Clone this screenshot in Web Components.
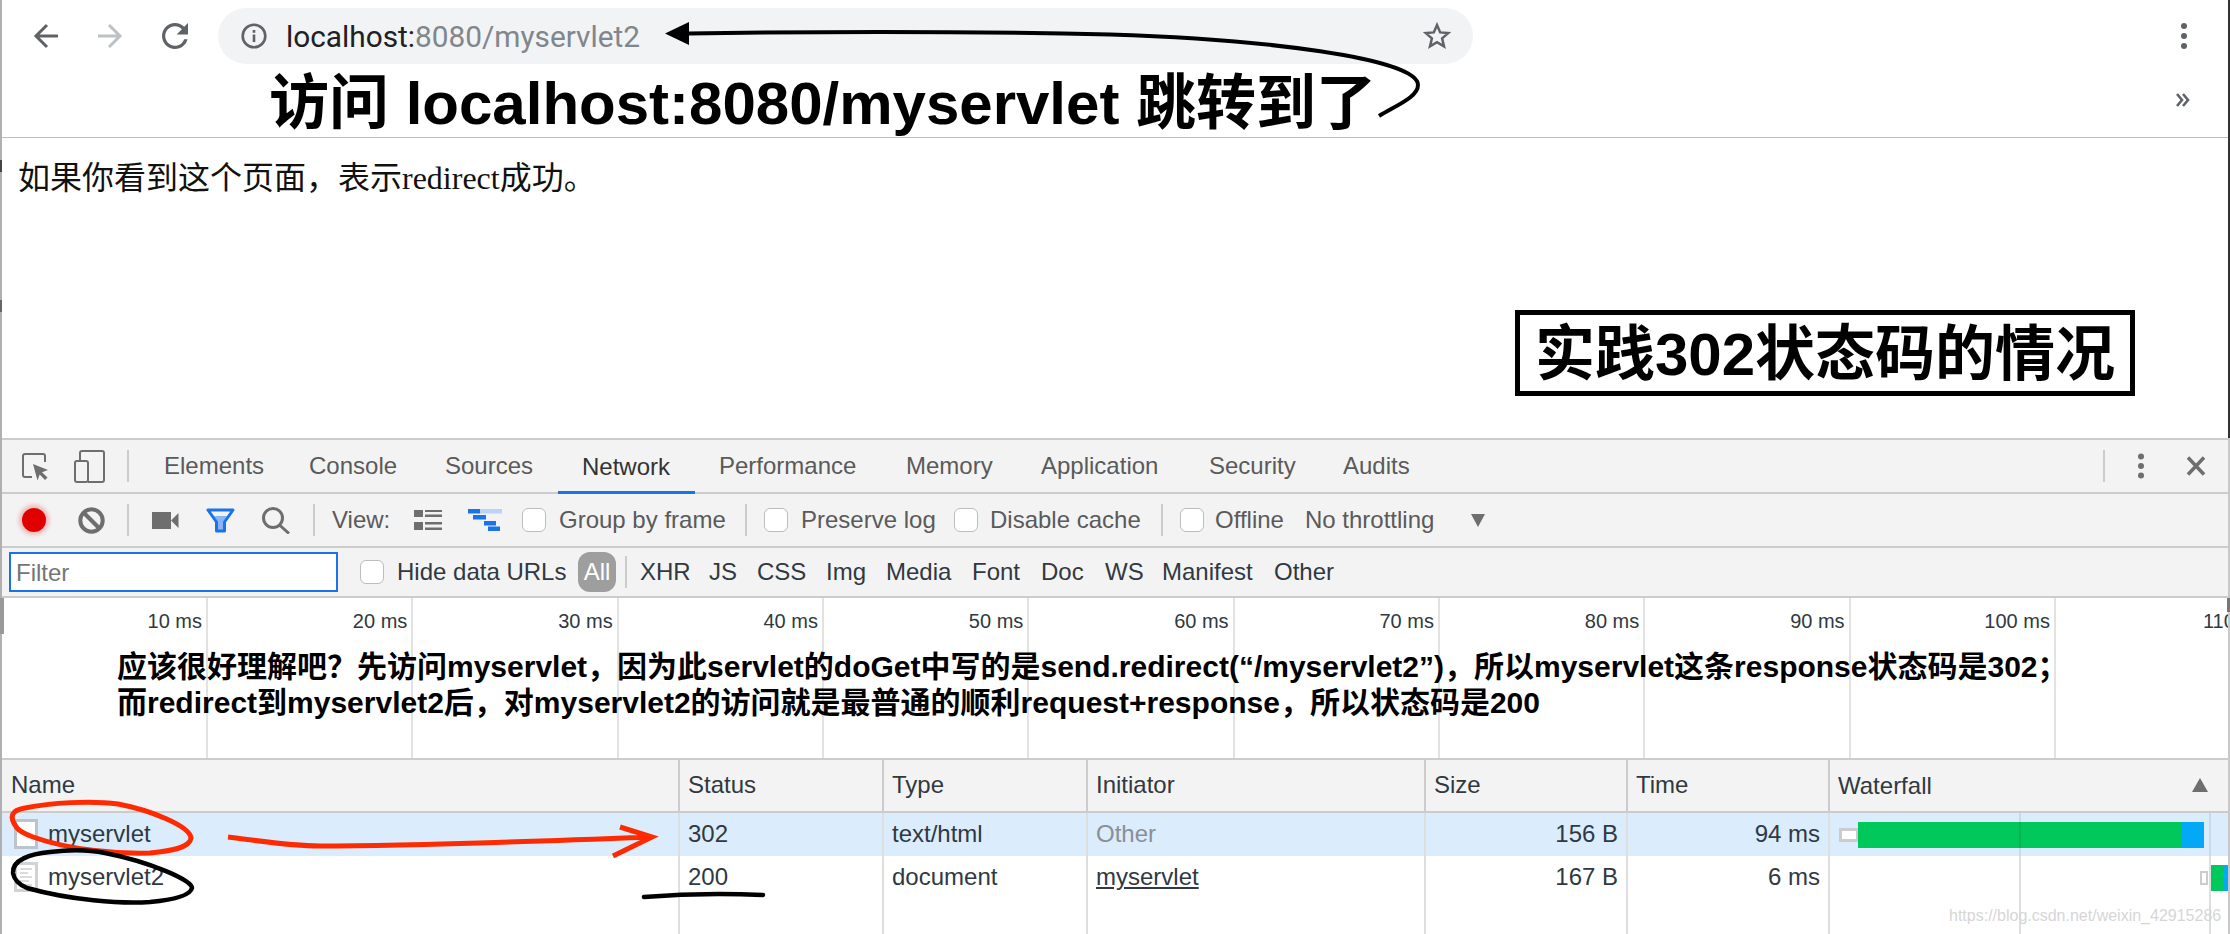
<!DOCTYPE html>
<html lang="zh">
<head>
<meta charset="utf-8">
<title>myservlet2</title>
<style>
html,body{margin:0;padding:0;background:#fff}
body{width:2230px;height:934px;overflow:hidden;position:relative;font-family:"Liberation Sans","Noto Sans CJK SC",sans-serif}
</style>
</head>
<body>
<browser-bar></browser-bar>
<page-view>
  如果你看到这个页面，表示redirect成功。
  <boxed-note slot="note">实践302状态码的情况</boxed-note>
</page-view>
<dev-tools>
  <dt-tabs></dt-tabs>
  <net-toolbar></net-toolbar>
  <filter-bar></filter-bar>
  <time-line></time-line>
  <net-table></net-table>
</dev-tools>
<annot-layer></annot-layer>
<script>
const SANS='"Liberation Sans","Noto Sans CJK SC",sans-serif';
function cols(pos,end){const a=[];for(let i=0;i<pos.length;i++){a.push(((i+1<pos.length?pos[i+1]:end)-pos[i])+'px');}return a.join(' ');}
function def(name,css,html){
  customElements.define(name,class extends HTMLElement{
    constructor(){super();const r=this.attachShadow({mode:'open'});r.innerHTML='<style>'+css+'</style>'+html;}
  });
}
const ICON={
 back:'<svg width="26" height="26" viewBox="0 0 26 26" fill="none" stroke="currentColor" stroke-width="3"><path d="M25 13H3M14 2L3 13l11 11"/></svg>',
 fwd:'<svg width="26" height="26" viewBox="0 0 26 26" fill="none" stroke="currentColor" stroke-width="3"><path d="M1 13h22M12 2l11 11-11 11"/></svg>',
 reload:'<svg width="26" height="26" viewBox="4 4 16 16" fill="#5f6368"><path d="M17.65 6.35C16.2 4.9 14.21 4 12 4c-4.42 0-7.99 3.58-7.99 8s3.57 8 7.99 8c3.73 0 6.84-2.55 7.73-6h-2.08c-.82 2.33-3.04 4-5.65 4-3.31 0-6-2.69-6-6s2.69-6 6-6c1.66 0 3.14.69 4.22 1.78L13 11h7V4l-2.35 2.35z"/></svg>',
 info:'<svg width="26" height="26" viewBox="0 0 26 26"><circle cx="13" cy="13" r="11.3" fill="none" stroke="#5f6368" stroke-width="2.6"/><rect x="11.7" y="11.5" width="2.6" height="7.5" fill="#5f6368"/><rect x="11.7" y="7" width="2.6" height="2.8" fill="#5f6368"/></svg>',
 star:'<svg width="28" height="28" viewBox="0 0 28 28" fill="none" stroke="#5f6368" stroke-width="2.5" stroke-linejoin="miter"><path d="M14 3l3.2 7.4 8 .7-6.1 5.3 1.9 7.9L14 20.1 7 24.3l1.9-7.9L2.8 11.100l8-.7z"/></svg>',
 kebab:'<svg width="8" height="28" viewBox="0 0 8 28" fill="#5f6368"><circle cx="4" cy="4" r="3"/><circle cx="4" cy="14" r="3"/><circle cx="4" cy="24" r="3"/></svg>',
 more:'<svg width="14" height="14" viewBox="0 0 14 14" fill="none" stroke="#5f6368" stroke-width="2.6"><path d="M1 1l5 6-5 6M7 1l5 6-5 6"/></svg>',
 inspect:'<svg width="27" height="27" viewBox="0 0 27 27"><path d="M10 24H3a2 2 0 0 1-2-2V3a2 2 0 0 1 2-2h18a2 2 0 0 1 2 2v6" fill="none" stroke="#6e6e6e" stroke-width="2"/><path d="M11 11l15 6-6 2.300 5.500 5.200-2.500 2.500-5.300-5.500-2.200 6z" fill="#6e6e6e"/></svg>',
 device:'<svg width="31" height="33" viewBox="0 0 31 33" fill="none" stroke="#6e6e6e" stroke-width="2"><path d="M6 10V3a2 2 0 0 1 2-2h20a2 2 0 0 1 2 2v27a2 2 0 0 1-2 2H14"/><rect x="1" y="11" width="13" height="21" rx="2"/></svg>',
 clear:'<svg width="27" height="27" viewBox="0 0 27 27" fill="none" stroke="#6e6e6e" stroke-width="4"><circle cx="13.500" cy="13.500" r="11.200"/><path d="M5.500 5.500l16 16"/></svg>',
 video:'<svg width="27" height="17" viewBox="0 0 27 17" fill="#6e6e6e"><rect x="0" y="0" width="19" height="17"/><path d="M19 8.500L26.500 1v15z"/></svg>',
 filter:'<svg width="29" height="25" viewBox="0 0 29 25"><path d="M8 8h13l-4 7v7h-5v-7z" fill="#8ab4f8"/><path d="M2 2h25L18.500 14v9h-8v-9z" fill="none" stroke="#1a73e8" stroke-width="3" stroke-linejoin="round"/></svg>',
 search:'<svg width="29" height="27" viewBox="0 0 29 27" fill="none" stroke="#6e6e6e" stroke-width="3"><circle cx="11" cy="11" r="9.500"/><path d="M17.500 18l9.500 8.500"/></svg>',
 list:'<svg width="28" height="20" viewBox="0 0 28 20" fill="#6e6e6e"><rect width="9" height="7"/><rect x="11" width="17" height="2"/><rect x="11" y="4.500" width="17" height="2.500"/><rect y="12" width="9" height="8"/><rect x="11" y="12" width="17" height="2.500"/><rect x="11" y="17.500" width="17" height="2.500"/></svg>',
 wf:'<svg width="34" height="22" viewBox="0 0 34 22"><rect width="12" height="4.500" fill="#1a73e8"/><rect x="12" width="22" height="4.500" fill="#b9d4f7"/><rect x="5" y="6" width="13" height="4.500" fill="#1a73e8"/><rect x="16" y="12" width="12" height="4.500" fill="#1a73e8"/><rect x="20" y="17.500" width="12" height="4.500" fill="#1a73e8"/></svg>',
 close:'<svg width="20" height="20" viewBox="0 0 20 20" fill="none" stroke="#6e6e6e" stroke-width="3.500"><path d="M2 1.500l16 17M18 1.500l-16 17"/></svg>',
 doc:'<svg width="24" height="30" viewBox="0 0 24 30"><rect x="1.500" y="1.500" width="21" height="27" fill="#fff" stroke="#bcc3cb" stroke-width="3"/></svg>',
 docText:'<svg width="24" height="30" viewBox="0 0 24 30"><rect x="1.500" y="1.500" width="21" height="27" fill="#fff" stroke="#d0d3d6" stroke-width="3"/><path d="M6 7h12M6 11h8M6 15h12M6 19h9M6 23h12" stroke="#dcdcdc" stroke-width="2"/></svg>'
};

def('browser-bar',`
:host{display:block;height:137px;border-bottom:1px solid #bdbdbd;box-sizing:content-box;background:#fff;font-family:Roboto,${SANS}}
.row{display:grid;grid-template-columns:${cols([0,33,97,162,218,1473,2180],2230)};height:56px;padding-top:8px;align-items:center;position:relative}
.btn{display:flex;align-items:center;height:26px;margin-top:-1px}
.b{color:#5f6368}.f{color:#bdc1c6}
.pill{height:56px;background:#f1f3f4;border-radius:28px;display:flex;align-items:center;padding:0 23px 0 23px;box-sizing:border-box}
.url{margin-left:19px;font-size:29.800px;letter-spacing:0;color:#80868b;flex:1;white-space:nowrap}
.url b{font-weight:400;color:#202124}
.star{display:flex;margin-right:-1px}
.mo{display:block;margin:38px 0 0 -4px;height:14px}
.side{height:0;align-self:start;padding-top:14px}
`,`
<div class="row">
  <div></div>
  <div class="btn b">${ICON.back}</div>
  <div class="btn f">${ICON.fwd}</div>
  <div class="btn">${ICON.reload}</div>
  <div class="pill">${ICON.info}<div class="url"><b>localhost:</b>8080/myservlet2</div><div class="star">${ICON.star}</div></div>
  <div></div>
  <div class="side"><div>${ICON.kebab}</div><div class="mo">${ICON.more}</div></div>
</div>`);

def('page-view',`
:host{display:block;height:300px;position:relative;background:#fff;box-sizing:border-box;padding:22px 0 0 18px;font-family:"Liberation Serif","Noto Sans CJK SC",serif;font-size:32px;line-height:36px;color:#111}
`,`<slot></slot><slot name="note"></slot>`);

def('boxed-note',`
:host{position:absolute;left:1515px;top:172px;width:620px;height:86px;box-sizing:border-box;border:5px solid #000;background:#fff;display:flex;align-items:center;justify-content:center;padding-top:3px;font-family:${SANS};font-weight:700;font-size:60px;color:#000;line-height:1;white-space:nowrap}
`,`<slot></slot>`);

def('dev-tools',`
:host{display:block;background:#f3f3f3;border-top:2px solid #ccc;font-family:${SANS};height:494px;overflow:hidden}
`,`<slot></slot>`);

def('dt-tabs',`
:host{display:grid;grid-template-columns:${cols([0,22,74,127,140,285,421,558,695,882,1017,1185,1319,1435,2103,2137,2186],2230)};height:52px;border-bottom:2px solid #ccc;align-items:center;font-size:24px;color:#5a5a5a;white-space:nowrap}
.i{display:flex;align-items:center;height:100%}
.sep{width:2px;height:32px;background:#ccc;align-self:center}
.t{height:100%;display:flex;align-items:center;box-sizing:border-box;padding-left:24px;position:relative}
.a{color:#333;box-shadow:inset 0 -3px 0 #1a73e8;height:54px;margin-bottom:-2px;align-self:start}
`,`
<div></div>
<div class="i">${ICON.inspect}</div>
<div class="i">${ICON.device}</div>
<div class="sep"></div>
<div class="t">Elements</div><div class="t">Console</div><div class="t">Sources</div><div class="t a">Network</div><div class="t">Performance</div><div class="t">Memory</div><div class="t">Application</div><div class="t">Security</div><div class="t">Audits</div>
<div></div>
<div class="sep"></div>
<div class="i"><svg width="8" height="26" viewBox="0 0 8 26" fill="#6e6e6e"><circle cx="4" cy="3.500" r="3"/><circle cx="4" cy="13" r="3"/><circle cx="4" cy="22.500" r="3"/></svg></div>
<div class="i">${ICON.close}</div>`);

def('dt-check',`
:host{display:block;width:24px;height:24px;box-sizing:border-box;background:#fff;border:1.5px solid #bdbdbd;border-radius:6px}
`,``);

def('net-toolbar',`
:host{display:grid;grid-template-columns:${cols([0,22,78,127,152,206,262,313,332,414,468,522,559,745,764,801,954,990,1161,1180,1215,1305,1471],1600)};height:52px;border-bottom:2px solid #ccc;align-items:center;font-size:24px;color:#5a5a5a;white-space:nowrap}
.i{display:flex;align-items:center}
.sep{width:2px;height:32px;background:#ccc}
.rec{width:24px;height:24px;border-radius:50%;background:#e00000;box-shadow:0 0 4px 3px rgba(224,0,0,.25)}
.tri{width:0;height:0;border-left:7.500px solid transparent;border-right:7.500px solid transparent;border-top:13px solid #6e6e6e}
`,`
<div></div>
<div class="rec"></div>
<div class="i">${ICON.clear}</div>
<div class="sep"></div>
<div class="i">${ICON.video}</div>
<div class="i">${ICON.filter}</div>
<div class="i">${ICON.search}</div>
<div class="sep"></div>
<div>View:</div>
<div class="i">${ICON.list}</div>
<div class="i">${ICON.wf}</div>
<dt-check></dt-check><div>Group by frame</div>
<div class="sep"></div>
<dt-check></dt-check><div>Preserve log</div>
<dt-check></dt-check><div>Disable cache</div>
<div class="sep"></div>
<dt-check></dt-check><div>Offline</div>
<div>No throttling</div>
<div class="tri"></div>`);

def('filter-bar',`
:host{display:grid;grid-template-columns:${cols([0,9,360,397,578,640,709,757,826,886,972,1041,1105,1162,1274],1400)};height:48px;border-bottom:2px solid #ccc;align-items:center;font-size:24px;color:#303942;white-space:nowrap}
.in{width:329px;height:40px;box-sizing:border-box;background:#fff;border:2px solid #1a73e8;color:#757575;display:flex;align-items:center;padding-left:5px;font-size:24px;padding-top:2px}
.sepwrap{display:flex;align-items:center;gap:9px}
.all{width:38px;height:40px;border-radius:12px;background:#9e9e9e;color:#fff;display:flex;align-items:center;justify-content:center}
.sep{width:2px;height:32px;background:#ccc}
`,`
<div></div>
<div class="in">Filter</div>
<dt-check></dt-check>
<div>Hide data URLs</div>
<div class="sepwrap"><div class="all">All</div><div class="sep"></div></div>
<div>XHR</div><div>JS</div><div>CSS</div><div>Img</div><div>Media</div><div>Font</div><div>Doc</div><div>WS</div><div>Manifest</div><div>Other</div>`);

def('time-line',`
:host{display:grid;grid-template-columns:repeat(11,205.33px);box-sizing:border-box;padding-left:2.670px;height:160px;background:#fff;position:relative;overflow:hidden;font-size:20px;color:#303942;white-space:nowrap}
.c{box-sizing:border-box;border-right:2px solid #e2e2e2;text-align:right;padding:11px 4px 0 0;line-height:24px}
.n{position:absolute;left:117px;top:51px;font-size:30px;line-height:35.5px;font-weight:700;color:#000}
.last{text-align:left;padding-left:147px;border-right:0}
`,`
<div class="c">10 ms</div><div class="c">20 ms</div><div class="c">30 ms</div><div class="c">40 ms</div><div class="c">50 ms</div><div class="c">60 ms</div><div class="c">70 ms</div><div class="c">80 ms</div><div class="c">90 ms</div><div class="c">100 ms</div><div class="c last">110 ms</div>
<div class="n">应该很好理解吧？先访问myservlet，因为此servlet的doGet中写的是send.redirect(“/myservlet2”)，所以myservlet这条response状态码是302；<br>而redirect到myservlet2后，对myservlet2的访问就是最普通的顺利request+response，所以状态码是200</div>`);

const gridCols='680px 204px 204px 338px 202px 202px 400px';
def('net-table',`
:host{display:block;border-top:2px solid #ccc;font-size:24px;color:#303942;background:#fff;position:relative;white-space:nowrap;height:174px;overflow:hidden}
.r{display:grid;grid-template-columns:${gridCols};height:44px;align-items:stretch}
.r>div{box-sizing:border-box;border-right:2px solid #dedede;display:flex;align-items:center;padding:0 8px 2px}
.h{height:51px;background:#f3f3f3;border-bottom:2px solid #ccc;box-sizing:content-box}
.h>div{border-right-color:#ccc;padding-bottom:1px}
.h>div:first-child{padding-left:11px}
.sel{background:#dbecfd;height:43px}
.rt{justify-content:flex-end}
.r>.name{padding-left:14px;gap:10px}
.name svg{flex:none}
.other{color:#8a8f96}
.lk{text-decoration:underline}
.r>.wf{position:relative;padding:0;border-right:0}
.tri{position:absolute;right:22px;top:18px;width:0;height:0;border-left:8px solid transparent;border-right:8px solid transparent;border-bottom:14px solid #6e6e6e}
.gl{position:absolute;top:0;bottom:0;width:2px;background:#dedede}
.sel .gl{background:rgba(0,0,0,.08)}
.bar{display:flex;align-items:center;height:100%}
.q{box-sizing:border-box;background:#fff;border:3px solid #ccc;border-right-width:2px}
.g{background:#00c85a}.bl{background:#03a9f4}
.fill{height:200px}
.mark{position:absolute;left:1949px;top:146px;font-size:16px;color:#d6d6d6;line-height:20px}
`,`
<div class="r h"><div>Name</div><div>Status</div><div>Type</div><div>Initiator</div><div>Size</div><div>Time</div><div class="wf"><span style="margin-left:8px">Waterfall</span><i class="tri"></i></div></div>
<div class="r sel"><div class="name">${ICON.doc}<span>myservlet</span></div><div>302</div><div>text/html</div><div class="other">Other</div><div class="rt">156 B</div><div class="rt">94 ms</div>
  <div class="wf"><i class="gl" style="left:189px"></i><i class="gl" style="left:379px"></i><div class="bar" style="margin-left:9px"><div class="q" style="width:19px;height:14px"></div><div class="g" style="width:324px;height:26px"></div><div class="bl" style="width:22px;height:26px"></div></div></div></div>
<div class="r"><div class="name">${ICON.docText}<span>myservlet2</span></div><div>200</div><div>document</div><div><span class="lk">myservlet</span></div><div class="rt">167 B</div><div class="rt">6 ms</div>
  <div class="wf"><i class="gl" style="left:189px"></i><i class="gl" style="left:379px"></i><div class="bar" style="margin-left:370px"><div class="q" style="width:8px;height:14px;border-width:2px"></div><div style="width:2px"></div><div class="g" style="width:14px;height:26px"></div><div class="bl" style="width:6px;height:26px"></div></div></div></div>
<div class="r fill"><div></div><div></div><div></div><div></div><div></div><div></div><div class="wf"><i class="gl" style="left:189px"></i><i class="gl" style="left:379px"></i></div></div>
<div class="mark">https://blog.csdn.net/weixin_42915286</div>`);

def('annot-layer',`
:host{position:absolute;left:0;top:0;width:2230px;height:934px;pointer-events:none;display:block}
svg{position:absolute;left:0;top:0}
.title{position:absolute;left:269px;top:70px;font-family:${SANS};font-weight:700;font-size:60px;line-height:68px;color:#000;white-space:nowrap}
`,`
<div class="title">访问 localhost:8080/myservlet 跳转到了</div>
<svg width="2230" height="934" viewBox="0 0 2230 934" fill="none">
  <path d="M665 33.500L689 22v23z" fill="#000"/>
  <path d="M688 33.500C850 31 1000 32 1110 34.500C1260 39 1418 58 1418 85C1418 97 1397 105 1379 116" stroke="#000" stroke-width="4"/>
  <path d="M17 828C8 816 12 810 25 808C50 803 90 800 118 804C150 810 190 826 191 838C190 848 170 851 150 853C115 854 70 850 33 837C25 834 20 832 17 828Z" stroke="#ff2a00" stroke-width="5"/>
  <path d="M228 837C260 841 290 846 320 846C400 846 520 842 650 837M620 827L652 837L613 856" stroke="#ff2a00" stroke-width="5"/>
  <path d="M13 873C12 860 30 854 50 852C75 849 90 850 105 853C150 862 192 880 192 888C190 896 172 900 150 902C120 904 70 900 27 888C20 885 14 880 13 873Z" stroke="#000" stroke-width="4.500"/>
  <path d="M644 897C680 894 720 893 763 895" stroke="#000" stroke-width="4.500" stroke-linecap="round"/>
  <rect x="0" y="0" width="2" height="934" fill="#b0b0b0"/>
  <rect x="0" y="160" width="2" height="12" fill="#444"/>
  <rect x="0" y="300" width="2" height="12" fill="#666"/>
  <rect x="0" y="598" width="4" height="36" fill="#999"/>
  <rect x="2228" y="0" width="2" height="438" fill="#333"/>
  <rect x="2228" y="438" width="2" height="496" fill="#c8c8c8"/>
  <rect x="2227" y="598" width="3" height="14" fill="#777"/>
</svg>`);
</script>
</body>
</html>
